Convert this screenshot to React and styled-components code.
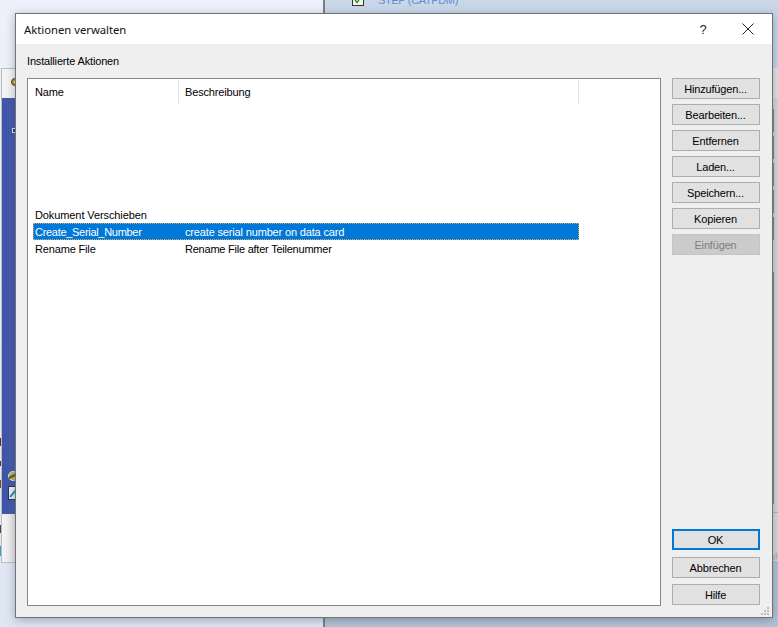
import React from "react";
import styled, { createGlobalStyle } from "styled-components";

const Global = createGlobalStyle`
  html, body { margin: 0; padding: 0; width: 778px; height: 627px; overflow: hidden; background: #e9edf7; }
  * { box-sizing: border-box; }
`;

const Desktop = styled.div`
  position: relative;
  width: 778px;
  height: 627px;
  overflow: hidden;
  background: linear-gradient(180deg, #eef1fb 0%, #e6ebf7 60%, #dfe6f3 100%);
  font-family: "Liberation Sans", Arial, sans-serif;
  font-size: 11px;
  letter-spacing: -0.16px;
  color: #000;
`;

const BackRight = styled.div`
  position: absolute;
  left: 323px;
  top: 0;
  width: 455px;
  height: 627px;
  border-left: 2px solid #7b7f85;
  background: #c9d7e9;
  display: flex;
  flex-direction: column;
`;

const StepRow = styled.div`
  display: flex;
  align-items: center;
  gap: 14px;
  padding-left: 27px;
  height: 68px;
  padding-bottom: 68px;
  color: #5f8fcb;
  font-size: 11px;
  letter-spacing: -0.35px;
`;

const CheckIcon = styled.svg`
  flex: none;
`;

const BackPanel = styled.div`
  height: 445px;
  flex: none;
  background: linear-gradient(180deg, #e4e4e4 0 30px, #d8d8d8 30px);
  display: flex;
  flex-direction: column;
  align-items: flex-end;
  padding: 41px 4px 0 0;
  gap: 4px;
  border-bottom: 1px solid #b8b8b8;
`;

const FieldStub = styled.div`
  width: 20px;
  height: ${p => p.$h}px;
  margin-bottom: ${p => p.$mb ?? 0}px;
  border: 1px solid #85888c;
  flex: none;
`;

const BackPanelFoot = styled.div`
  height: 48px;
  flex: none;
  background: #dadada;
  display: flex;
  justify-content: flex-end;
  align-items: flex-end;
  padding: 0 0 1px;
`;

const BackBottom = styled.div`
  flex: 1;
  background: #b4c2d6;
`;

const BackLeft = styled.div`
  position: absolute;
  left: 1px;
  top: 68px;
  width: 30px;
  height: 495px;
  border: 1px solid #b9bcc2;
  border-right: none;
  background: #f3f3f3;
  display: flex;
  flex-direction: column;
`;

const BackLeftHead = styled.div`
  height: 29px;
  position: relative;
`;

const GearIcon = styled.svg`
  position: absolute;
  left: 9px;
  top: 7px;
`;

const BackLeftBlue = styled.div`
  height: 416px;
  background: linear-gradient(90deg, #3f55a8 0%, #4c64b4 100%);
  position: relative;
`;

const BackLeftFoot = styled.div`
  flex: 1;
  background: linear-gradient(90deg, #f4f4f4, #d9d9d9);
`;

const Marker = styled.span`
  position: absolute;
  left: 10px;
  top: 30px;
  width: 5px;
  height: 5px;
  border: 1px solid #dfe3f2;
  background: #2c3a7c;
`;

const TrayIcon = styled.svg`
  position: absolute;
  left: 6px;
  top: ${p => p.$top}px;
`;

const Speck = styled.span`
  position: absolute;
  left: 0;
  top: ${p => p.$top}px;
  width: 2px;
  height: ${p => p.$h}px;
  background: ${p => p.$c};
`;

const Dialog = styled.div`
  position: absolute;
  left: 15px;
  top: 13px;
  width: 758px;
  height: 605px;
  border: 1px solid #6f7378;
  background: #efefef;
  display: flex;
  flex-direction: column;
  box-shadow: 0 2px 9px rgba(50, 60, 80, 0.38);
`;

const TitleBar = styled.div`
  height: 30px;
  flex: none;
  background: #fff;
  display: flex;
  align-items: center;
  padding-left: 8px;
  font-family: "Noto Sans", "Open Sans", sans-serif;
  font-size: 11.3px;
  letter-spacing: -0.02px;
  color: #111;
`;

const TitleText = styled.span`
  flex: 1;
`;

const HelpMark = styled.span`
  width: 46px;
  text-align: center;
  font-family: "Liberation Sans", sans-serif;
  font-size: 13px;
  color: #222;
`;

const CloseButton = styled.span`
  width: 46px;
  height: 30px;
  display: flex;
  align-items: center;
  justify-content: center;
  padding-right: 2px;
`;

const Body = styled.div`
  flex: 1;
  display: grid;
  grid-template-columns: 634px 88px;
  column-gap: 11px;
  padding: 0 11px 11px 11px;
  min-height: 0;
`;

const ListColumn = styled.div`
  display: flex;
  flex-direction: column;
  min-height: 0;
`;

const GroupLabel = styled.div`
  height: 34px;
  flex: none;
  padding-top: 11px;
  line-height: 13px;
`;

const ListBox = styled.div`
  flex: 1;
  border: 1px solid #84878c;
  background: #fff;
  padding-top: 1px;
`;

const HeaderRow = styled.div`
  display: flex;
  height: 24px;
  width: 551px;
  margin-bottom: 102px;
`;

const HeaderCell = styled.div`
  width: ${p => p.$w}px;
  flex: none;
  padding-left: ${p => p.$pl}px;
  padding-top: 6px;
  line-height: 13px;
  border-right: 1px solid #e4e5e7;
`;

const Row = styled.div`
  display: flex;
  align-items: center;
  height: 17px;
  width: 546px;
  margin-left: 5px;
  padding-top: 1px;
  color: ${p => (p.$selected ? "#fff" : "#000")};
  background: ${p => (p.$selected ? "#0078d7" : "transparent")};
  outline: ${p => (p.$selected ? "1px dotted #e2a860" : "none")};
  outline-offset: -1px;
`;

const Cell = styled.div`
  width: ${p => p.$w}px;
  flex: none;
  padding-left: 2px;
  white-space: nowrap;
  line-height: 13px;
  letter-spacing: ${p => p.$spacing ?? -0.16}px;
`;

const ButtonColumn = styled.div`
  display: flex;
  flex-direction: column;
  padding: 34px 0 1px;
`;

const Btn = styled.div`
  height: 21px;
  flex: none;
  margin-bottom: ${p => p.$mb ?? 5}px;
  padding-right: 1px;
  display: flex;
  align-items: center;
  justify-content: center;
  background: ${p => (p.$disabled ? "#cbcbcb" : "#e1e1e1")};
  color: ${p => (p.$disabled ? "#7f7f7f" : "#000")};
  border: ${p => (p.$default ? "2px solid #0078d7" : "1px solid #adadad")};
  border-color: ${p => (p.$disabled ? "#c4c4c4" : p.$default ? "#0078d7" : "#adadad")};
`;

const Spacer = styled.div`
  flex: 1;
`;

const Grip = styled.div`
  position: absolute;
  right: 2px;
  bottom: 1px;
  line-height: 0;
`;

const top = ["Hinzufügen...", "Bearbeiten...", "Entfernen", "Laden...", "Speichern...", "Kopieren"];

const GripDots = ({ size = 10, fill = "#bdbdbd" }) => (
  <svg width={size} height={size} viewBox="0 0 10 10" fill={fill}>
    <rect x="7" y="1" width="2" height="2" />
    <rect x="4" y="4" width="2" height="2" />
    <rect x="7" y="4" width="2" height="2" />
    <rect x="1" y="7" width="2" height="2" />
    <rect x="4" y="7" width="2" height="2" />
    <rect x="7" y="7" width="2" height="2" />
  </svg>
);

export default function App() {
  return (
    <Desktop>
      <Global />
      <BackRight>
        <StepRow>
          <CheckIcon width="12" height="12" viewBox="0 0 12 12">
            <rect x="0.5" y="0.5" width="11" height="11" fill="#f6f6ef" stroke="#333" />
            <path d="M3 6 L5 8.5 L9 3" stroke="#2f9a2f" strokeWidth="1.5" fill="none" />
          </CheckIcon>
          <span>STEP (CATPDM)</span>
        </StepRow>
        <BackPanel>
          <FieldStub $h={23} />
          <FieldStub $h={23} />
          <FieldStub $h={23} />
          <FieldStub $h={23} />
          <FieldStub $h={23} $mb={28} />
          <FieldStub $h={232} />
        </BackPanel>
        <BackPanelFoot>
          <GripDots size={8} fill="#a8a8a8" />
        </BackPanelFoot>
        <BackBottom />
      </BackRight>
      <Speck $top={438} $h={8} $c="#7a1f3a" />
      <Speck $top={461} $h={5} $c="#6b2a2a" />
      <Speck $top={480} $h={8} $c="#7a4a1f" />
      <Speck $top={525} $h={8} $c="#554a22" />
      <Speck $top={546} $h={10} $c="#3a9ad8" />
      <BackLeft>
        <BackLeftHead>
          <GearIcon width="7" height="12" viewBox="0 0 7 12">
            <circle cx="4" cy="6" r="3.5" fill="#b09a2c" stroke="#4a3f1a" />
            <circle cx="4" cy="6" r="1.2" fill="#f0e6b0" />
          </GearIcon>
        </BackLeftHead>
        <BackLeftBlue>
          <Marker />
          <TrayIcon $top={371} width="10" height="14" viewBox="0 0 10 14">
            <circle cx="5" cy="7" r="4.5" fill="#c9b24a" stroke="#e8e8e0" />
            <path d="M1 9 L9 5" stroke="#3c6a2a" strokeWidth="2" />
          </TrayIcon>
          <TrayIcon $top={388} width="9" height="14" viewBox="0 0 9 14">
            <rect x="0.5" y="0.5" width="8" height="13" fill="#eef2f6" stroke="#30353f" />
            <path d="M2 11 L8 4" stroke="#2a8fc0" strokeWidth="2" />
          </TrayIcon>
        </BackLeftBlue>
        <BackLeftFoot />
      </BackLeft>
      <Dialog>
        <TitleBar>
          <TitleText>Aktionen verwalten</TitleText>
          <HelpMark>?</HelpMark>
          <CloseButton>
            <svg width="12" height="12" viewBox="0 0 12 12">
              <path d="M0.5 0.5 L11.5 11.5 M11.5 0.5 L0.5 11.5" stroke="#222" strokeWidth="1" fill="none" />
            </svg>
          </CloseButton>
        </TitleBar>
        <Body>
          <ListColumn>
            <GroupLabel>Installierte Aktionen</GroupLabel>
            <ListBox>
              <HeaderRow>
                <HeaderCell $w={151} $pl={7}>Name</HeaderCell>
                <HeaderCell $w={400} $pl={6}>Beschreibung</HeaderCell>
              </HeaderRow>
              <Row>
                <Cell $w={150} $spacing={-0.1}>Dokument Verschieben</Cell>
                <Cell />
              </Row>
              <Row $selected>
                <Cell $w={150} $spacing={-0.3}>Create_Serial_Number</Cell>
                <Cell>create serial number on data card</Cell>
              </Row>
              <Row>
                <Cell $w={150}>Rename File</Cell>
                <Cell $spacing={-0.23}>Rename File after Teilenummer</Cell>
              </Row>
            </ListBox>
          </ListColumn>
          <ButtonColumn>
            {top.map(label => <Btn key={label}>{label}</Btn>)}
            <Btn $disabled>Einfügen</Btn>
            <Spacer />
            <Btn $default $mb={7}>OK</Btn>
            <Btn $mb={6}>Abbrechen</Btn>
            <Btn $mb={0}>Hilfe</Btn>
          </ButtonColumn>
        </Body>
        <Grip><GripDots /></Grip>
      </Dialog>
    </Desktop>
  );
}
